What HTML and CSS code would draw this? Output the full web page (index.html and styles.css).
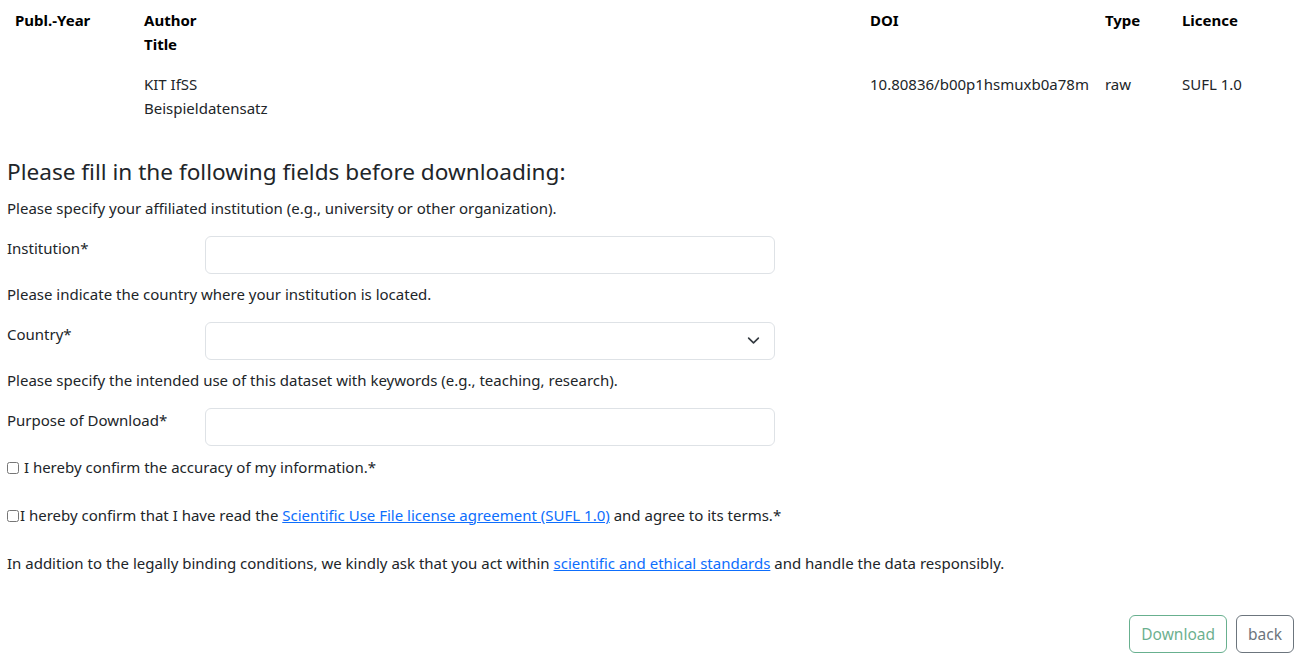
FILE: index.html
```html
<!DOCTYPE html>
<html lang="en">
<head>
<meta charset="utf-8">
<title>Download</title>
<link rel="stylesheet" href="styles.css">
</head>
<body>
<div class="page">
  <table class="pubs">
    <thead>
      <tr>
        <th class="c-year">Publ.-Year</th>
        <th class="c-title">Author<br>Title</th>
        <th class="c-doi">DOI</th>
        <th class="c-type">Type</th>
        <th class="c-lic">Licence</th>
      </tr>
    </thead>
    <tbody>
      <tr>
        <td></td>
        <td>KIT IfSS<br>Beispieldatensatz</td>
        <td>10.80836/b00p1hsmuxb0a78m</td>
        <td>raw</td>
        <td>SUFL 1.0</td>
      </tr>
    </tbody>
  </table>

  <h4 class="form-title">Please fill in the following fields before downloading:</h4>
  <form class="dl-form">
    <p class="hint">Please specify your affiliated institution (e.g., university or other organization).</p>
    <div class="row">
      <label class="lbl" for="inst">Institution*</label>
      <input class="ctl" id="inst" type="text">
    </div>
    <p class="hint">Please indicate the country where your institution is located.</p>
    <div class="row">
      <label class="lbl" for="country">Country*</label>
      <div class="ctl select">
        <svg class="chev" width="16" height="16" viewBox="0 0 16 16"><path d="M2 5l6 6 6-6" fill="none" stroke="#343a40" stroke-width="2" stroke-linecap="round" stroke-linejoin="round"/></svg>
      </div>
    </div>
    <p class="hint">Please specify the intended use of this dataset with keywords (e.g., teaching, research).</p>
    <div class="row">
      <label class="lbl" for="purpose">Purpose of Download*</label>
      <input class="ctl" id="purpose" type="text">
    </div>
    <div class="check"><input type="checkbox" class="cb"> I hereby confirm the accuracy of my information.*</div>
    <div class="check"><input type="checkbox" class="cb">I hereby confirm that I have read the <a href="#">Scientific Use File license agreement (SUFL 1.0)</a> and agree to its terms.*</div>
    <p class="note">In addition to the legally binding conditions, we kindly ask that you act within <a href="#">scientific and ethical standards</a> and handle the data responsibly.</p>
    <div class="actions">
      <button type="button" class="btn btn-dl" disabled>Download</button>
      <button type="button" class="btn btn-back">back</button>
    </div>
  </form>
</div>
</body>
</html>
```

FILE: styles.css
```css
* { box-sizing: border-box; }
html, body { margin: 0; padding: 0; background: #fff; }
body {
  font-family: "Noto Sans", "Open Sans", sans-serif;
  font-size: 15px;
  line-height: 24px;
  color: #212529;
}
.page { padding: 0 7px; }
.pubs {
  width: 100%;
  border-collapse: collapse;
  margin-bottom: 29px;
}
.pubs th, .pubs td {
  text-align: left;
  vertical-align: top;
  padding: 8px;
  line-height: 24px;
}
.pubs th { font-weight: 700; color: #000; }
.c-year { width: 129px; }
.c-title { width: 726px; }
.c-doi { width: 233px; }
.c-type { width: 77px; }
.form-title {
  font-size: 22.6px;
  font-weight: 400;
  line-height: 29px;
  margin: 0 0 10px;
}
.hint { margin: 0 0 15.5px; }
.row {
  display: flex;
  align-items: flex-start;
  margin-bottom: 8.7px;
}
.lbl { width: 198px; flex: none; padding-top: 0.5px; }
.ctl {
  width: 570px;
  height: 38px;
  border: 1px solid #dee2e6;
  border-radius: 6px;
  background: #fff;
  font: inherit;
  padding: 6px 12px;
}
.select {
  display: flex;
  align-items: center;
  justify-content: flex-end;
  padding-right: 14px;
}
.chev { width: 13px; height: 13px; }
.check { margin-bottom: 24px; }
.cb {
  width: 12px;
  height: 12px;
  margin: 0 1px 0 0;
  vertical-align: -1px;
}
.note { margin: 0 0 40px; }
a { color: #0d6efd; text-decoration: underline; }
.actions {
  display: flex;
  justify-content: flex-end;
  gap: 9px;
  padding-right: 9px;
}
.btn {
  font: inherit;
  font-size: 15.5px;
  height: 38px;
  padding: 0 11px;
  border-radius: 6px;
  background: #fff;
}
.btn-dl {
  border: 1px solid #198754;
  color: #198754;
  opacity: 0.65;
}
.btn-back {
  border: 1px solid #6c757d;
  color: #6c757d;
}
```
